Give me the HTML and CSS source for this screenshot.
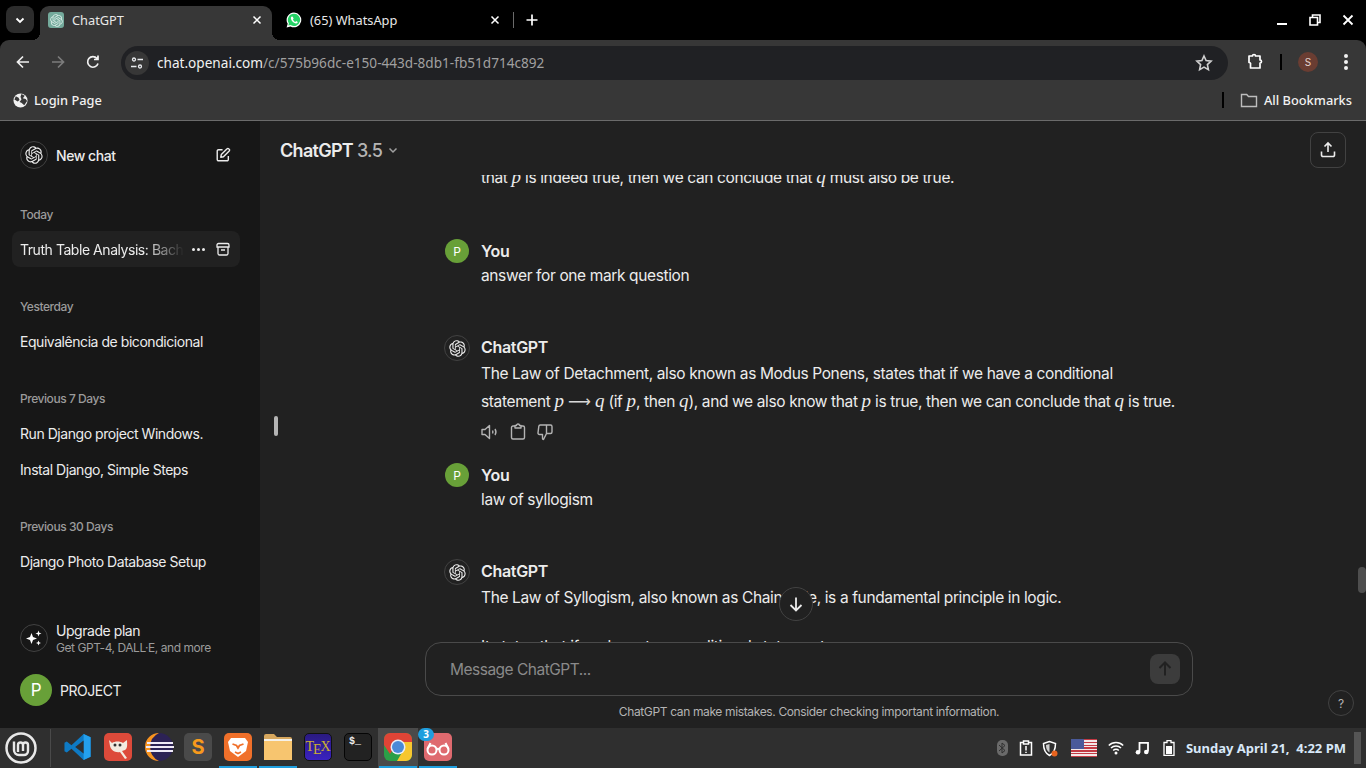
FILE: index.html
```html
<!DOCTYPE html>
<html lang="en">
  <head>
    <meta charset="UTF-8" />
    <meta name="viewport" content="width=device-width, initial-scale=1.0" />
    <title>ChatGPT</title>
    <link rel="stylesheet" href="styles.css">
  </head>
  <body>
    <svg class="defs" width="0" height="0">
      <symbol id="gpt" viewBox="0 0 41 41">
        <path fill="currentColor" d="M37.5324 16.8707C37.9808 15.5241 38.1363 14.0974 37.9886 12.6859C37.8409 11.2744 37.3934 9.91076 36.676 8.68622C35.6126 6.83404 33.9882 5.3676 32.0373 4.4985C30.0864 3.62941 27.9098 3.40259 25.8215 3.85078C24.8796 2.7893 23.7219 1.94125 22.4257 1.36341C21.1295 0.785575 19.7249 0.491269 18.3058 0.500197C16.1708 0.495044 14.0893 1.16803 12.3614 2.42214C10.6335 3.67624 9.34853 5.44666 8.6917 7.47815C7.30085 7.76286 5.98686 8.3414 4.8377 9.17505C3.68854 10.0087 2.73073 11.0782 2.02839 12.312C0.956464 14.1591 0.498905 16.2988 0.721698 18.4228C0.944492 20.5467 1.83612 22.5449 3.268 24.1293C2.81966 25.4759 2.66413 26.9026 2.81182 28.3141C2.95951 29.7256 3.40701 31.0892 4.12437 32.3138C5.18791 34.1659 6.8123 35.6322 8.76321 36.5013C10.7141 37.3704 12.8907 37.5973 14.9789 37.1492C15.9208 38.2107 17.0786 39.0587 18.3747 39.6366C19.6709 40.2144 21.0755 40.5087 22.4946 40.4998C24.6307 40.5054 26.7133 39.8321 28.4418 38.5772C30.1704 37.3223 31.4556 35.5506 32.1119 33.5179C33.5027 33.2332 34.8167 32.6547 35.9659 31.821C37.115 30.9874 38.0728 29.9178 38.7752 28.684C39.8458 26.8371 40.3023 24.6979 40.0789 22.5748C39.8556 20.4517 38.9639 18.4544 37.5324 16.8707ZM22.4978 37.8849C20.7443 37.8874 19.0459 37.2733 17.6994 36.1501C17.7601 36.117 17.8666 36.0586 17.936 36.0161L25.9004 31.4156C26.1003 31.3019 26.2663 31.137 26.3813 30.9378C26.4964 30.7386 26.5563 30.5124 26.5549 30.2825V19.0542L29.9213 20.998C29.9389 21.0068 29.9541 21.0198 29.9656 21.0359C29.977 21.052 29.9842 21.0707 29.9867 21.0902V30.3889C29.9842 32.375 29.1946 34.2791 27.7909 35.6841C26.3872 37.0892 24.4838 37.8806 22.4978 37.8849ZM6.39227 31.0064C5.51397 29.4888 5.19742 27.7107 5.49804 25.9832C5.55718 26.0187 5.66048 26.0818 5.73461 26.1244L13.699 30.7248C13.8975 30.8408 14.1233 30.902 14.3532 30.902C14.583 30.902 14.8088 30.8408 15.0073 30.7248L24.731 25.1103V28.9979C24.7321 29.0177 24.7283 29.0376 24.7199 29.0556C24.7115 29.0736 24.6988 29.0893 24.6829 29.1012L16.6317 33.7497C14.9096 34.7416 12.8643 35.0097 10.9447 34.4954C9.02506 33.9811 7.38785 32.7263 6.39227 31.0064ZM4.29707 13.6194C5.17156 12.0998 6.55279 10.9364 8.19885 10.3327C8.19885 10.4013 8.19491 10.5228 8.19491 10.6071V19.808C8.19351 20.0378 8.25334 20.2638 8.36823 20.4629C8.48312 20.6619 8.64893 20.8267 8.84863 20.9404L18.5723 26.5542L15.206 28.4979C15.1894 28.5089 15.1703 28.5155 15.1505 28.5173C15.1307 28.5191 15.1107 28.516 15.0924 28.5082L7.04046 23.8557C5.32135 22.8601 4.06716 21.2235 3.55289 19.3046C3.03862 17.3858 3.30624 15.3413 4.29707 13.6194ZM31.955 20.0556L22.2312 14.4411L25.5976 12.4981C25.6142 12.4872 25.6333 12.4805 25.6531 12.4787C25.6729 12.4769 25.6928 12.4801 25.7111 12.4879L33.7631 17.1364C34.9967 17.849 36.0017 18.8982 36.6606 20.1613C37.3194 21.4244 37.6047 22.849 37.4832 24.2684C37.3617 25.6878 36.8382 27.0432 35.9743 28.1759C35.1103 29.3086 33.9415 30.1717 32.6047 30.6641C32.6047 30.5947 32.6047 30.4733 32.6047 30.3889V21.188C32.6066 20.9586 32.5474 20.7328 32.4332 20.5338C32.319 20.3348 32.154 20.1698 31.955 20.0556ZM35.3055 15.0128C35.2464 14.9765 35.1431 14.9142 35.069 14.8717L27.1045 10.2712C26.906 10.1554 26.6803 10.0943 26.4504 10.0943C26.2206 10.0943 25.9948 10.1554 25.7963 10.2712L16.0726 15.8858V11.9982C16.0715 11.9783 16.0753 11.9585 16.0837 11.9405C16.0921 11.9225 16.1048 11.9068 16.1207 11.8949L24.1719 7.25025C25.4053 6.53903 26.8158 6.19376 28.2383 6.25482C29.6608 6.31589 31.0364 6.78077 32.2044 7.59508C33.3723 8.40939 34.2842 9.53945 34.8334 10.8531C35.3826 12.1667 35.5464 13.6095 35.3055 15.0128ZM14.2424 21.9419L10.8752 19.9981C10.8576 19.9893 10.8423 19.9763 10.8309 19.9602C10.8195 19.9441 10.8122 19.9254 10.8098 19.9058V10.6071C10.8107 9.18295 11.2173 7.78848 11.9819 6.58696C12.7466 5.38544 13.8377 4.42659 15.1275 3.82264C16.4173 3.21869 17.8524 2.99464 19.2649 3.1767C20.6775 3.35876 22.0089 3.93941 23.1034 4.85067C23.0427 4.88379 22.937 4.94215 22.8668 4.98473L14.9024 9.58517C14.7025 9.69878 14.5366 9.86356 14.4215 10.0626C14.3065 10.2616 14.2466 10.4877 14.2479 10.7175L14.2424 21.9419ZM16.071 17.9991L20.4018 15.4978L24.7325 17.9975V22.9985L20.4018 25.4983L16.071 22.9985V17.9991Z" />
      </symbol>
    </svg>

    <div class="tabstrip">
      <button class="tab-search">
        <svg width="12" height="12" viewBox="0 0 12 12"><path d="M2.500 4.500 6 8l3.500-3.500" fill="none" stroke="#fff" stroke-width="1.800" /></svg>
      </button>
      <div class="tab tab-active">
        <span class="favicon-gpt"><svg width="13" height="13"><use href="#gpt" /></svg></span>
        <span class="tab-title">ChatGPT</span>
        <svg width="10" height="10" viewBox="0 0 10 10"><path d="M1.500 1.500l7 7m0-7l-7 7" stroke="#fff" stroke-width="1.500" /></svg>
      </div>
      <div class="tab tab-other">
        <svg width="16" height="16" viewBox="0 0 16 16">
          <path d="M8 .500a7.400 7.400 0 0 0-6.300 11.200L.600 15.500l3.900-1A7.400 7.400 0 1 0 8 .500z" fill="#fff" />
          <path d="M8 1.800a6.100 6.100 0 0 0-5.100 9.500l-.600 2.300 2.400-.600A6.100 6.100 0 1 0 8 1.800z" fill="#25d366" />
          <path d="M5.900 4.600c-.500.200-1 .800-1 1.600 0 1.900 2.500 5 5.200 5.200.900 0 1.600-.600 1.700-1.300l-1.700-1-.700.800c-1-.300-2-1.300-2.500-2.500l.700-.700-.800-1.900z" fill="#fff" />
        </svg>
        <span class="tab-title">(65) WhatsApp</span>
        <svg width="10" height="10" viewBox="0 0 10 10"><path d="M1.500 1.500l7 7m0-7l-7 7" stroke="#fff" stroke-width="1.500" /></svg>
      </div>
      <span class="tab-sep"></span>
      <svg class="tab-new" width="14" height="14" viewBox="0 0 14 14"><path d="M7 1.500v11M1.500 7h11" stroke="#fff" stroke-width="1.700" /></svg>
      <div class="win-controls">
        <svg width="12" height="12" viewBox="0 0 12 12"><path d="M1 10h10" stroke="#fff" stroke-width="2" /></svg>
        <svg width="12" height="12" viewBox="0 0 12 12"><path d="M1 3.500h7.500V11H1zM3.500 3.500V1H11v7.500H8.500" fill="none" stroke="#fff" stroke-width="1.600" /></svg>
        <svg width="12" height="12" viewBox="0 0 12 12"><path d="M1.500 1.500l9 9m0-9l-9 9" stroke="#fff" stroke-width="1.800" /></svg>
      </div>
    </div>

    <div class="toolbar">
      <svg class="nav-icon" width="16" height="16" viewBox="0 0 16 16"><path d="M14 8H3m5-5.500L2.500 8 8 13.500" fill="none" stroke="#f1f1f1" stroke-width="1.700" /></svg>
      <svg class="nav-icon" width="16" height="16" viewBox="0 0 16 16"><path d="M2 8h11M8 2.500 13.500 8 8 13.500" fill="none" stroke="#7c7c7c" stroke-width="1.700" /></svg>
      <svg class="nav-icon" width="16" height="16" viewBox="0 0 16 16"><path d="M13 9.500A5.300 5.300 0 1 1 12 4.500M13 1.500v4H9" fill="none" stroke="#f1f1f1" stroke-width="1.700" /></svg>
      <div class="omnibox">
        <span class="site-info">
          <svg width="14" height="14" viewBox="0 0 14 14"><g fill="none" stroke="#e8eaed" stroke-width="1.300"><circle cx="4" cy="3.500" r="1.500" /><path d="M7.500 3.500H13M1 10.500h5.500" /><circle cx="10" cy="10.500" r="1.500" /></g></svg>
        </span>
        <span class="url">chat.openai.com<span class="url-path">/c/575b96dc-e150-443d-8db1-fb51d714c892</span></span>
        <svg class="star" width="18" height="18" viewBox="0 0 18 18"><path d="M9 2l2.100 4.600 5 .600-3.700 3.400 1 5L9 13.100l-4.400 2.500 1-5L1.900 7.200l5-.600z" fill="none" stroke="#d0d0d0" stroke-width="1.600" /></svg>
      </div>
      <svg class="puzzle" width="18" height="18" viewBox="0 0 18 18"><path d="M3 3.500h3.500a1.500 1.500 0 0 1 3 0H14v4a1.500 1.500 0 0 1 0 3v5H4.500v-3.500a1.500 1.500 0 0 0-1.500-2z" transform="translate(0 -.500)" fill="none" stroke="#fff" stroke-width="1.700" stroke-linejoin="round" /></svg>
      <span class="toolbar-sep"></span>
      <span class="profile">S</span>
      <span class="kebab"><i></i><i></i><i></i></span>
    </div>

    <div class="bookmarks">
      <svg class="globe" width="15" height="15" viewBox="0 0 16 16"><circle cx="8" cy="8" r="7.500" fill="#f1f1f1" /><path d="M3 3.500 6 5l1 2.500-2 1.500-3.500-2zM9 1l3.500 2-2 2.500 3 1 1.500 2-3 4.500L9 10.500l-2-1 2-2.500L8 4z" fill="#383838" /></svg>
      <span class="bm-label">Login Page</span>
      <span class="bm-spacer"></span>
      <span class="bm-sep"></span>
      <svg width="18" height="16" viewBox="0 0 18 16"><path d="M1.500 2.500h5.200L8.500 4.500h8v10h-15z" fill="none" stroke="#bdbdbd" stroke-width="1.400" /></svg>
      <span class="bm-label">All Bookmarks</span>
    </div>

    <div class="app">
      <aside class="sidebar">
        <div class="new-chat">
          <span class="logo-circle"><svg width="18" height="18"><use href="#gpt" /></svg></span>
          <span class="new-chat-label">New chat</span>
          <svg width="16" height="16" viewBox="0 0 18 18"><path d="M8.500 3H4a1.500 1.500 0 0 0-1.500 1.500v9.500A1.500 1.500 0 0 0 4 15.500h9.500A1.500 1.500 0 0 0 15 14V10M6.500 11.500l.600-3L13.600 2a1.200 1.200 0 0 1 1.800 0l.600.600a1.200 1.200 0 0 1 0 1.800L9.500 11z" fill="none" stroke="#ececec" stroke-width="1.600" stroke-linejoin="round" /></svg>
        </div>

        <div class="history">
          <h3 class="group-title">Today</h3>
          <div class="chat-item chat-item-active">
            <span class="chat-fade">Truth Table Analysis: Bachelor</span>
            <span class="dots"><i></i><i></i><i></i></span>
            <svg width="14" height="14" viewBox="0 0 14 14"><path d="M1 3a1.500 1.500 0 0 1 1.500-1.500h9A1.500 1.500 0 0 1 13 3v2H1zM2 5v6.500A1.500 1.500 0 0 0 3.500 13h7a1.500 1.500 0 0 0 1.500-1.500V5M5 8h4" fill="none" stroke="#ececec" stroke-width="1.300" /></svg>
          </div>

          <h3 class="group-title">Yesterday</h3>
          <div class="chat-item">Equivalência de bicondicional</div>

          <h3 class="group-title">Previous 7 Days</h3>
          <div class="chat-item">Run Django project Windows.</div>
          <div class="chat-item">Instal Django, Simple Steps</div>

          <h3 class="group-title">Previous 30 Days</h3>
          <div class="chat-item">Django Photo Database Setup</div>
        </div>

        <div class="upgrade">
          <span class="logo-circle">
            <svg width="18" height="18" viewBox="0 0 18 18" fill="#fff"><path d="M6.500 4 8 8l4 1.500L8 11l-1.500 4L5 11 1 9.500 5 8zM13.500 1.500l.800 2.200 2.200.800-2.200.800-.800 2.200-.800-2.200-2.200-.800 2.200-.800zM13.500 11.500l.700 1.800 1.800.700-1.800.700-.700 1.800-.700-1.800-1.800-.700 1.800-.700z" /></svg>
          </span>
          <div class="upgrade-text">
            <div class="upgrade-title">Upgrade plan</div>
            <div class="upgrade-sub">Get GPT-4, DALL·E, and more</div>
          </div>
        </div>
        <div class="account">
          <span class="account-avatar">P</span>
          <span>PROJECT</span>
        </div>
      </aside>

      <main class="main">
        <header class="main-header">
          <span class="model">ChatGPT <span class="model-ver">3.5</span></span>
          <svg width="12" height="12" viewBox="0 0 12 12"><path d="M2.500 4.500 6 8l3.500-3.500" fill="none" stroke="#a0a0a0" stroke-width="1.500" /></svg>
          <span class="share">
            <svg width="18" height="18" viewBox="0 0 18 18"><path d="M9 11V2.500M5.500 5.500 9 2l3.500 3.500M2.500 10.500V14A1.500 1.500 0 0 0 4 15.500h10a1.500 1.500 0 0 0 1.500-1.500v-3.500" fill="none" stroke="#ececec" stroke-width="1.600" /></svg>
          </span>
        </header>

        <div class="thread">
          <div class="thread-inner">
            <div class="msg">
              <span class="avatar-slot"></span>
              <div class="msg-body">
                <p>that <i class="math">p</i> is indeed true, then we can conclude that <i class="math">q</i> must also be true.</p>
              </div>
            </div>

            <div class="msg">
              <span class="avatar-slot"><span class="avatar-user">P</span></span>
              <div class="msg-body">
                <div class="author">You</div>
                <div class="user-text">answer for one mark question</div>
              </div>
            </div>

            <div class="msg msg-actions">
              <span class="avatar-slot"><span class="avatar-gpt"><svg width="17" height="17"><use href="#gpt" /></svg></span></span>
              <div class="msg-body">
                <div class="author">ChatGPT</div>
                <p>The Law of Detachment, also known as Modus Ponens, states that if we have a conditional<br>statement <i class="math">p</i> <span class="arrow">⟶</span> <i class="math">q</i> (if <i class="math">p</i>, then <i class="math">q</i>), and we also know that <i class="math">p</i> is true, then we can conclude that <i class="math">q</i> is true.</p>
                <div class="actions">
                  <svg width="18" height="18" viewBox="0 0 18 18"><path d="M1 6.500h3L8.500 2.500v13L4 11.500H1zM11.500 7.500a3 3 0 0 1 0 3M14 6a5.500 5.500 0 0 1 0 6" fill="none" stroke="#b4b4b4" stroke-width="1.400" stroke-linejoin="round" /></svg>
                  <svg width="16" height="18" viewBox="0 0 16 18"><path d="M5 3H3a1.500 1.500 0 0 0-1.500 1.500v10A1.500 1.500 0 0 0 3 16h10a1.500 1.500 0 0 0 1.500-1.500v-10A1.500 1.500 0 0 0 13 3h-2M5 5V2.500h1.500a1.500 1.500 0 0 1 3 0H11V5z" fill="none" stroke="#b4b4b4" stroke-width="1.400" stroke-linejoin="round" /></svg>
                  <svg width="16" height="18" viewBox="0 0 16 18"><path d="M5.500 11.500v4a1 1 0 0 0 1 1l3-6V2H3.300a1.500 1.500 0 0 0-1.500 1.300L1 9.800a1.500 1.500 0 0 0 1.500 1.700zM9.500 2h4a1.500 1.500 0 0 1 1.500 1.500v5.500a1.500 1.500 0 0 1-1.500 1.500h-4" fill="none" stroke="#b4b4b4" stroke-width="1.400" stroke-linejoin="round" /></svg>
                </div>
              </div>
            </div>

            <div class="msg">
              <span class="avatar-slot"><span class="avatar-user">P</span></span>
              <div class="msg-body">
                <div class="author">You</div>
                <div class="user-text">law of syllogism</div>
              </div>
            </div>

            <div class="msg">
              <span class="avatar-slot"><span class="avatar-gpt"><svg width="17" height="17"><use href="#gpt" /></svg></span></span>
              <div class="msg-body">
                <div class="author">ChatGPT</div>
                <p>The Law of Syllogism, also known as Chain Rule, is a fundamental principle in logic.</p>
                <p class="para">It states that if we have two conditional statements:</p>
              </div>
            </div>
          </div>
          <span class="scroll-down">
            <svg width="18" height="18" viewBox="0 0 18 18"><path d="M9 2.500v13M3.500 10 9 15.500 14.500 10" fill="none" stroke="#ececec" stroke-width="1.800" /></svg>
          </span>
        </div>

        <div class="composer">
          <div class="input-box">
            <span class="placeholder">Message ChatGPT...</span>
            <span class="send">
              <svg width="18" height="18" viewBox="0 0 18 18"><path d="M9 15.500v-13M3.500 8 9 2.500 14.500 8" fill="none" stroke="#212121" stroke-width="2" /></svg>
            </span>
          </div>
        </div>
        <div class="disclaimer">ChatGPT can make mistakes. Consider checking important information.</div>
        <span class="help">?</span>
        <span class="page-thumb"></span>
      </main>
      <span class="sidebar-handle"></span>
    </div>

    <div class="taskbar">
      <span class="mint">
        <svg width="32" height="32" viewBox="0 0 32 32"><circle cx="16" cy="16" r="14.500" fill="none" stroke="#e8e8e8" stroke-width="2.500" /><path d="M9 9.500v8.500a5 5 0 0 0 5 5h5a4 4 0 0 0 4-4v-6a2.500 2.500 0 0 0-5 0v6m0-6a2.500 2.500 0 0 0-5 0v7" fill="none" stroke="#e8e8e8" stroke-width="2.400" /></svg>
      </span>
      <span class="task-sep"></span>
      <span class="launcher">
        <span class="task-app">
          <svg width="28" height="28" viewBox="0 0 30 30"><path d="M21 1 28.500 4.500v21L21 29 8 17l-5 4-2.500-1.500v-9L3 9l5 4z" fill="#0e7ac4" /><path d="M21 1 28.500 4.500v21L21 29z" fill="#24a0ed" /><path d="M21 8v14l-9-7z" fill="#2f2f2f" /></svg>
        </span>
        <span class="task-app">
          <svg width="28" height="28" viewBox="0 0 28 28"><rect width="28" height="28" rx="5" fill="#dd4a3a" /><path d="M5 7l3 3c3-2 8-2 11 0l4-3c0 4 1 8-2 10l-3 1 5 7-2 1-5-7c-5 1-9-2-10-6z" fill="#f3eadf" /><circle cx="11" cy="12" r="1.500" fill="#333" /><circle cx="16" cy="12" r="1.500" fill="#333" /></svg>
        </span>
        <span class="task-app">
          <svg width="32" height="32" viewBox="0 0 32 32"><circle cx="17" cy="16" r="14" fill="#2c2255" /><path d="M17 2A14 14 0 0 0 17 30 15.500 15.500 0 0 1 17 2z" fill="#f7941e" /><path d="M5 12h26M4 16h28M5 20h26" stroke="#efeaf7" stroke-width="2" /></svg>
        </span>
        <span class="task-app">
          <span class="sublime">S</span>
        </span>
        <span class="task-app task-running">
          <svg width="28" height="28" viewBox="0 0 28 28"><rect width="28" height="28" rx="5" fill="#f0702a" /><path d="M7 5h14l3 4-2 9-8 6-8-6-2-9z" fill="#fff" /><path d="M8.500 11l4 1.500L14 15l1.500-2.500 4-1.500M11 19l3 1.500 3-1.500" fill="none" stroke="#f0702a" stroke-width="1.800" /></svg>
        </span>
        <span class="task-app task-running">
          <svg width="28" height="26" viewBox="0 0 28 26"><path d="M0 2a2 2 0 0 1 2-2h8l3 3h13a2 2 0 0 1 2 2v3H0z" fill="#d6a75e" /><rect y="5" width="28" height="3" fill="#f5f1e8" /><path d="M0 7h28v19H0z" fill="#f7c56f" /></svg>
        </span>
        <span class="task-app">
          <span class="tex">T<span class="tex-e">E</span>X</span>
        </span>
        <span class="task-app">
          <span class="term">$_</span>
        </span>
        <span class="task-app task-running task-active">
          <svg width="28" height="28" viewBox="0 0 28 28"><rect width="28" height="28" rx="6" fill="#2b9f47" /><path d="M0 6a6 6 0 0 1 6-6h16a6 6 0 0 1 6 6v3H14L6 21 0 12z" fill="#df4436" /><path d="M14 9h14v13a6 6 0 0 1-6 6h-9l7-12z" fill="#f7c72f" /><circle cx="14" cy="14" r="7.500" fill="#e8eef8" /><circle cx="14" cy="14" r="6" fill="#4a8ad8" /></svg>
        </span>
        <span class="task-app task-running">
          <svg width="28" height="28" viewBox="0 0 28 28"><rect width="28" height="28" rx="5" fill="#df6a6f" /><g fill="none" stroke="#fff" stroke-width="2"><circle cx="8" cy="17" r="4.500" /><circle cx="20" cy="17" r="4.500" /><path d="M12.500 16.500c1-1 2-1 3 0M3.500 16l3-6M24.500 16l-3-6" /></g></svg>
          <span class="badge">3</span>
        </span>
      </span>

      <span class="tray">
        <span class="bt">
          <svg width="8" height="12" viewBox="0 0 8 12"><path d="M1 3l6 5.500L4 11V1l3 2.500L1 9" fill="none" stroke="#2f2f2f" stroke-width="1" /></svg>
        </span>
        <svg width="14" height="16" viewBox="0 0 14 16"><path d="M4.500 2.500H1.500v12.500h11V2.500H9.500M4.500 1h5v3h-5zM7 6v4.500M7 11.800v1.200" fill="none" stroke="#fff" stroke-width="1.500" /></svg>
        <svg class="tray-shield" width="16" height="17" viewBox="0 0 16 17"><path d="M7.500 1.500 1.500 3.500c0 5 1 9.500 6 12 5-2.500 6-7 6-12z" fill="none" stroke="#fff" stroke-width="1.500" /><path d="M7.500 4 4 5c0 3 .600 6 3.500 7.500z" fill="#cfcfcf" /><circle cx="12.500" cy="13.500" r="3" fill="#e8641f" /></svg>
        <span class="flag"><span class="canton"></span></span>
        <svg width="16" height="14" viewBox="0 0 16 14"><g fill="none" stroke="#fff" stroke-width="1.500"><path d="M.800 4.500a10 10 0 0 1 14.400 0M3 7a7 7 0 0 1 10 0M5.200 9.500a4 4 0 0 1 5.600 0" /></g><circle cx="8" cy="12" r="1.500" fill="#fff" /></svg>
        <svg width="14" height="14" viewBox="0 0 14 14"><path d="M4.500 11V1.800H13V10.500" fill="none" stroke="#fff" stroke-width="1.800" /><circle cx="3" cy="11.200" r="2.300" fill="#fff" /><circle cx="11.300" cy="11" r="2.300" fill="#fff" /></svg>
        <svg class="tray-battery" width="12" height="16" viewBox="0 0 12 16"><path d="M4 .700h4V2.500h3v13H1v-13h3z" fill="none" stroke="#fff" stroke-width="1.300" /><rect x="3" y="6" width="6" height="8" fill="#fff" /></svg>
        <span class="clock">Sunday April 21,&nbsp; 4:22 PM</span>
        <span class="show-desktop"></span>
      </span>
    </div>
  </body>
</html>
```

FILE: styles.css
```css
* {
  box-sizing: border-box;
}

html,
body {
  height: 100%;
}

body {
  margin: 0;
  width: 1366px;
  height: 768px;
  overflow: hidden;
  display: flex;
  flex-direction: column;
  background-color: #000;
  font-family: Inter, "Noto Sans", sans-serif;
  color: #ececec;
}

.defs {
  position: absolute;
}

svg {
  display: block;
  flex: none;
}

/* browser tab strip */
.tabstrip {
  height: 40px;
  display: flex;
  align-items: flex-end;
  background-color: #000;
  padding-left: 6px;
  font-family: "Noto Sans", sans-serif;
  font-size: 12.8px;
  color: #e8e8e8;
}

.tab-search {
  width: 28px;
  height: 27px;
  margin-bottom: 7px;
  padding: 0;
  border: none;
  border-radius: 8px;
  background-color: #2c2c2c;
  display: flex;
  align-items: center;
  justify-content: center;
}

.tab {
  width: 232px;
  height: 34px;
  padding: 0 10px 6px 8px;
  display: flex;
  align-items: center;
  gap: 8px;
}

.tab-active {
  position: relative;
  margin-left: 6px;
  background-color: #373737;
  border-radius: 9px 9px 0 0;
}

.tab-active::before,
.tab-active::after {
  content: "";
  position: absolute;
  bottom: 0;
  width: 8px;
  height: 8px;
}

.tab-active::before {
  left: -8px;
  background: radial-gradient(circle at 0 0, transparent 8px, #373737 8px);
}

.tab-active::after {
  right: -8px;
  background: radial-gradient(circle at 100% 0, transparent 8px, #373737 8px);
}

.tab-other {
  padding-left: 14px;
  padding-right: 4px;
}

.favicon-gpt {
  width: 16px;
  height: 16px;
  border-radius: 3px;
  background-color: #74aa9c;
  display: flex;
  align-items: center;
  justify-content: center;
  color: #d8ece6;
}

.tab-title {
  flex: 1;
  white-space: nowrap;
}

.tab-sep {
  width: 1px;
  height: 16px;
  margin: 0 0 12px 9px;
  background-color: #6a6a6a;
}

.tab-new {
  margin: 0 0 13px 11px;
}

.win-controls {
  margin-left: auto;
  height: 40px;
  padding-right: 12px;
  display: flex;
  align-items: center;
  gap: 21px;
}

/* browser toolbar */
.toolbar {
  height: 44px;
  background-color: #373737;
  border-radius: 9px 9px 0 0;
  display: flex;
  align-items: center;
  padding-left: 15px;
}

.nav-icon {
  margin-right: 19px;
}

.omnibox {
  width: 1107px;
  height: 34px;
  margin-left: 1px;
  margin-top: 1px;
  border-radius: 17px;
  background-color: #202124;
  display: flex;
  align-items: center;
  padding: 0 15px 0 4px;
}

.site-info {
  width: 24px;
  height: 24px;
  border-radius: 50%;
  background-color: #373737;
  display: flex;
  align-items: center;
  justify-content: center;
}

.url {
  margin-left: 8px;
  font-family: "Noto Sans", sans-serif;
  font-size: 13.6px;
  color: #f1f1f1;
}

.url-path {
  color: #a0a0a0;
}

.star {
  margin-left: auto;
}

.puzzle {
  margin-left: 18px;
}

.toolbar-sep {
  width: 2px;
  height: 16px;
  margin-left: 16px;
  background-color: #000;
}

.profile {
  width: 20px;
  height: 20px;
  margin-left: 16px;
  border-radius: 50%;
  background-color: #6a3d32;
  color: #e6d3ce;
  font-size: 10px;
  display: flex;
  align-items: center;
  justify-content: center;
}

.kebab {
  margin-left: 26px;
  display: flex;
  flex-direction: column;
  gap: 2px;
}

.kebab i {
  width: 4px;
  height: 4px;
  border-radius: 50%;
  background-color: #f1f1f1;
}

/* bookmarks bar */
.bookmarks {
  height: 37px;
  background-color: #373737;
  border-bottom: 1px solid #6b6b6b;
  display: flex;
  align-items: center;
  padding: 0 14px 4px 13px;
  gap: 6px;
  font-family: "Noto Sans", sans-serif;
  font-size: 12.8px;
  font-weight: 500;
  color: #f1f1f1;
}

.bm-spacer {
  flex: 1;
}

.bm-sep {
  width: 2px;
  height: 16px;
  margin-right: 10px;
  background-color: #000;
}

/* chatgpt page */
.app {
  position: relative;
  flex: 1;
  min-height: 0;
  display: flex;
}

.sidebar {
  width: 260px;
  background-color: #171717;
  display: flex;
  flex-direction: column;
  font-size: 14px;
  letter-spacing: -0.45px;
}

.new-chat {
  height: 28px;
  margin: 20px 29px 0 20px;
  display: flex;
  align-items: center;
  gap: 8px;
  font-weight: 500;
}

.new-chat-label {
  flex: 1;
}

.logo-circle {
  width: 28px;
  height: 28px;
  border: 1px solid #424242;
  border-radius: 50%;
  display: flex;
  align-items: center;
  justify-content: center;
  color: #ececec;
}

.history {
  flex: 1;
  padding: 34px 20px 0 12px;
}

.group-title {
  height: 29px;
  margin: 0;
  padding: 4px 8px 0;
  font-size: 12px;
  line-height: 16px;
  font-weight: 500;
  color: #9b9b9b;
}

.chat-item {
  height: 36px;
  padding: 0 8px;
  display: flex;
  align-items: center;
  white-space: nowrap;
  gap: 8px;
}

.chat-item + .group-title {
  margin-top: 27px;
  padding-top: 5px;
}

.chat-item-active {
  margin-top: -1px;
  margin-bottom: 1px;
  background-color: #212121;
  border-radius: 8px;
}

.chat-fade {
  width: 164px;
  overflow: hidden;
  -webkit-mask-image: linear-gradient(to right, #000 125px, transparent 164px);
  mask-image: linear-gradient(to right, #000 125px, transparent 164px);
}

.dots {
  display: flex;
  gap: 2px;
  margin-right: 3px;
}

.dots i {
  width: 3px;
  height: 3px;
  border-radius: 50%;
  background-color: #ececec;
}

.upgrade {
  height: 36px;
  margin-bottom: 18px;
  padding-left: 20px;
  display: flex;
  align-items: center;
  gap: 8px;
}

.upgrade-text {
  padding-top: 2px;
}

.upgrade-title {
  line-height: 18px;
}

.upgrade-sub {
  font-size: 12px;
  line-height: 16px;
  color: #9b9b9b;
}

.account {
  height: 32px;
  margin-bottom: 22px;
  padding-left: 20px;
  display: flex;
  align-items: center;
  gap: 8px;
}

.account-avatar {
  width: 32px;
  height: 32px;
  border-radius: 50%;
  background-color: #68a038;
  color: #fff;
  font-size: 17px;
  display: flex;
  align-items: center;
  justify-content: center;
}

.sidebar-handle {
  position: absolute;
  left: 274px;
  top: 295px;
  width: 4px;
  height: 20px;
  border-radius: 2px;
  background-color: #b4b4b4;
}

.main {
  position: relative;
  flex: 1;
  min-width: 0;
  background-color: #212121;
  display: flex;
  flex-direction: column;
}

.main-header {
  height: 54px;
  padding: 0 20px;
  display: flex;
  align-items: center;
  gap: 5px;
  font-size: 18px;
  font-weight: 600;
  letter-spacing: -0.7px;
}

.model {
  margin-top: 4px;
}

.main-header > svg {
  margin-top: 4px;
}

.model-ver {
  color: #b4b4b4;
  font-weight: 500;
}

.share {
  width: 36px;
  height: 36px;
  margin-left: auto;
  margin-top: 3px;
  border: 1px solid #424242;
  border-radius: 8px;
  display: flex;
  align-items: center;
  justify-content: center;
}

.thread {
  position: relative;
  flex: 1;
  min-height: 0;
  overflow: hidden;
}

.thread-inner {
  width: 736px;
  margin: -12px auto 0;
  font-size: 15.5px;
  letter-spacing: -0.37px;
}

.msg {
  display: flex;
  gap: 12px;
  margin-bottom: 48px;
}

.msg-actions {
  margin-bottom: 0;
}

.avatar-slot {
  width: 24px;
  flex: none;
}

.avatar-user {
  width: 24px;
  height: 24px;
  border-radius: 50%;
  background-color: #68a038;
  color: #fff;
  font-size: 12px;
  letter-spacing: 0;
  display: flex;
  align-items: center;
  justify-content: center;
}

.avatar-gpt {
  width: 26px;
  height: 26px;
  margin-left: -1px;
  border: 1px solid #424242;
  border-radius: 50%;
  display: flex;
  align-items: center;
  justify-content: center;
  color: #ececec;
}

.msg-body {
  white-space: nowrap;
}

.author {
  height: 24px;
  line-height: 24px;
  font-size: 16px;
  font-weight: 600;
  letter-spacing: -0.32px;
}

.msg-body p {
  margin: 0 0 -1px;
  padding-top: 1px;
  line-height: 28px;
}

.msg-body .para {
  margin-top: 21px;
}

.user-text {
  height: 24px;
  padding-top: 1px;
  line-height: 24px;
}

.math {
  font-family: "Liberation Serif", serif;
  font-size: 19px;
  line-height: 0;
  letter-spacing: 0;
}

.arrow {
  font-family: "DejaVu Sans", sans-serif;
  font-size: 16px;
  line-height: 0;
  color: #d8d8d8;
  letter-spacing: 0;
}

.actions {
  height: 48px;
  padding-top: 8px;
  display: flex;
  align-items: flex-start;
  gap: 11px;
}

.scroll-down {
  position: absolute;
  left: 519px;
  top: 412px;
  width: 34px;
  height: 34px;
  border: 1px solid #424242;
  border-radius: 50%;
  background-color: #212121;
  display: flex;
  align-items: center;
  justify-content: center;
}

.composer {
  padding-right: 8px;
  display: flex;
  justify-content: center;
}

.input-box {
  width: 768px;
  height: 54px;
  padding: 0 12px 0 24px;
  border: 1px solid #4a4a4a;
  border-radius: 16px;
  background-color: #212121;
  display: flex;
  align-items: center;
}

.placeholder {
  font-size: 15.5px;
  letter-spacing: -0.5px;
  color: #8a8a8a;
}

.send {
  width: 30px;
  height: 30px;
  margin-left: auto;
  border-radius: 8px;
  background-color: #3c3c3c;
  display: flex;
  align-items: center;
  justify-content: center;
}

.disclaimer {
  height: 32px;
  padding-right: 8px;
  padding-top: 8px;
  text-align: center;
  font-size: 12px;
  line-height: 16px;
  letter-spacing: -0.36px;
  color: #b4b4b4;
}

.help {
  position: absolute;
  right: 12px;
  bottom: 12px;
  width: 26px;
  height: 26px;
  border: 1px solid #424242;
  border-radius: 50%;
  display: flex;
  align-items: center;
  justify-content: center;
  font-size: 12px;
  color: #b4b4b4;
}

.page-thumb {
  position: absolute;
  right: 0;
  top: 446px;
  width: 8px;
  height: 26px;
  border-radius: 4px;
  background-color: #4e4e4e;
}

/* desktop panel */
.taskbar {
  height: 40px;
  background-color: #2f2f2f;
  display: flex;
  align-items: center;
  padding-left: 5px;
}

.mint {
  width: 32px;
  height: 32px;
}

.task-sep {
  width: 1px;
  height: 38px;
  margin-left: 13px;
  background-color: #4a4a4a;
}

.launcher {
  display: flex;
  margin-left: 7px;
}

.task-app {
  position: relative;
  width: 40px;
  height: 40px;
  padding-bottom: 2px;
  display: flex;
  align-items: center;
  justify-content: center;
}

.task-running::after {
  content: "";
  position: absolute;
  left: 1px;
  right: 1px;
  bottom: 0;
  height: 2px;
  background-color: #1f9ede;
}

.task-active {
  background-color: #4a4a4a;
}

.sublime {
  width: 28px;
  height: 28px;
  border-radius: 5px;
  background-color: #4a4a4a;
  color: #f89a1c;
  font-size: 20px;
  font-weight: 700;
  display: flex;
  align-items: center;
  justify-content: center;
}

.tex {
  width: 28px;
  height: 28px;
  border-radius: 5px;
  background: linear-gradient(#2a1a80, #3a22c0);
  border: 1px solid #111;
  color: #cbb032;
  font-family: "Liberation Serif", serif;
  font-size: 14px;
  display: flex;
  align-items: center;
  justify-content: center;
}

.tex-e {
  position: relative;
  top: 3px;
  margin: 0 -1px;
}

.term {
  width: 28px;
  height: 28px;
  padding: 2px 0 0 4px;
  border: 1px solid #050505;
  border-radius: 5px;
  background-color: #222;
  color: #f1f1f1;
  font-family: "Liberation Mono", monospace;
  font-size: 10px;
  font-weight: 700;
}

.badge {
  position: absolute;
  left: 0;
  top: 0;
  width: 16px;
  height: 13px;
  border-radius: 7px;
  background-color: #1f9ede;
  color: #fff;
  font-family: "Noto Sans", sans-serif;
  font-size: 10px;
  font-weight: 700;
  line-height: 13px;
  text-align: center;
}

.tray {
  margin-left: auto;
  height: 40px;
  padding-right: 5px;
  display: flex;
  align-items: center;
  gap: 11px;
  font-family: "Noto Sans", sans-serif;
}

.bt {
  width: 11px;
  height: 16px;
  border-radius: 5px;
  background-color: #6a6a6a;
  display: flex;
  align-items: center;
  justify-content: center;
}

.tray-shield {
  margin-left: -2px;
}

.flag {
  position: relative;
  width: 26px;
  height: 18px;
  margin-left: 2px;
  background: repeating-linear-gradient(#c23a44 0 1.4px, #f3e8e8 1.4px 2.8px);
}

.canton {
  position: absolute;
  left: 0;
  top: 0;
  width: 13px;
  height: 10px;
  background-color: #4a5a9a;
}

.tray-battery {
  margin-left: 3px;
}

.clock {
  font-size: 13px;
  font-weight: 700;
  color: #d8e8f8;
  white-space: nowrap;
}

.show-desktop {
  width: 7px;
  height: 32px;
  margin-left: -3px;
  background-color: #555;
}
```
